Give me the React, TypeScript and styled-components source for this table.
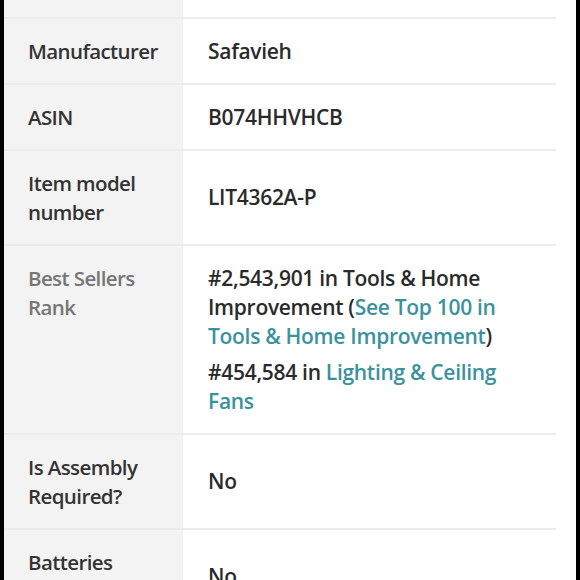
import React from 'react';
import styled, { createGlobalStyle } from 'styled-components';

const GlobalStyle = createGlobalStyle`
  html, body {
    margin: 0;
    padding: 0;
    background: #000;
    overflow: hidden;
  }
`;

const Frame = styled.div`
  width: 580px;
  height: 580px;
  box-sizing: border-box;
  padding: 0 4px;
  background: #000;
  overflow: hidden;
`;

const Table = styled.div`
  background: #fff;
  margin-top: -47px;
  font-family: 'Open Sans', 'Noto Sans', sans-serif;
  font-weight: 600;
  line-height: 29px;
  color: #222;
`;

const Row = styled.div`
  display: grid;
  grid-template-columns: 179px 1fr;
`;

const Label = styled.div<{ $muted?: boolean }>`
  background: #f3f3f3;
  padding: 17.5px 10px 17.5px 24px;
  border-bottom: 2px solid #ebebeb;
  font-size: 20.5px;
  color: ${(p) => (p.$muted ? '#767676' : '#333')};
  letter-spacing: -0.6px;
  display: flex;
  align-items: flex-start;
`;

const Value = styled.div`
  margin-right: 20px;
  padding: 17.5px 30px 17.5px 25px;
  border-bottom: 2px solid #ececec;
  font-size: 21px;
  display: flex;
  flex-direction: column;
  justify-content: center;
  letter-spacing: -0.3px;
  color: #2a2a2a;
`;

const RankLine = styled.div`
  & + & {
    margin-top: 7px;
  }
`;

const LinkText = styled.span`
  color: #3a929c;
`;

type Spec = { label: React.ReactNode; value: React.ReactNode; muted?: boolean };

const specs: Spec[] = [
  { label: 'Item Weight', value: '3.85 pounds' },
  { label: 'Manufacturer', value: 'Safavieh' },
  { label: 'ASIN', value: 'B074HHVHCB' },
  { label: 'Item model number', value: 'LIT4362A-P' },
  {
    label: 'Best Sellers Rank',
    muted: true,
    value: (
      <>
        <RankLine>
          #2,543,901 in Tools &amp; Home Improvement (
          <LinkText>See Top 100 in Tools &amp; Home Improvement</LinkText>)
        </RankLine>
        <RankLine>
          #454,584 in <LinkText>Lighting &amp; Ceiling Fans</LinkText>
        </RankLine>
      </>
    ),
  },
  { label: 'Is Assembly Required?', value: 'No' },
  { label: 'Batteries Included?', value: 'No' },
];

export default function App(): JSX.Element {
  return (
    <Frame>
      <GlobalStyle />
      <Table>
        {specs.map((s, i) => (
          <Row key={i}>
            <Label $muted={s.muted}>{s.label}</Label>
            <Value>{s.value}</Value>
          </Row>
        ))}
      </Table>
    </Frame>
  );
}
